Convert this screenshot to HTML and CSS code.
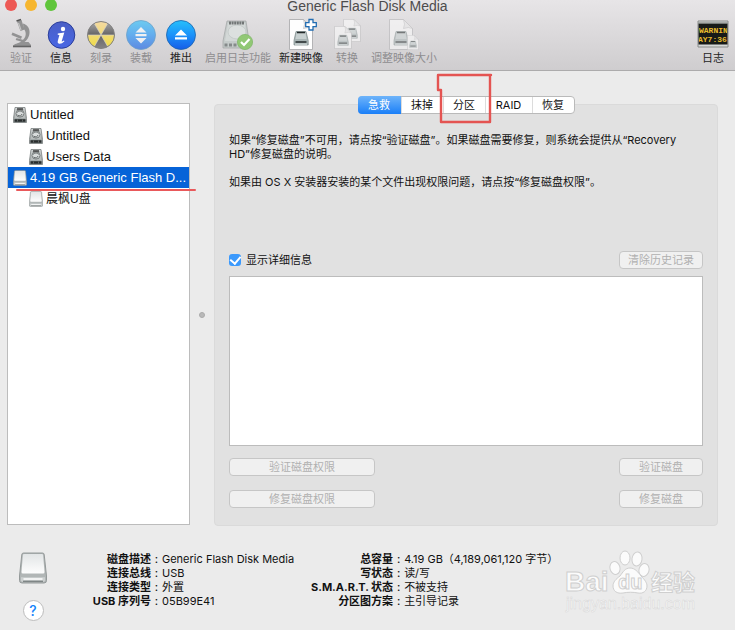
FILE: index.html
```html
<!DOCTYPE html>
<html lang="zh-CN">
<head>
<meta charset="utf-8">
<title>Generic Flash Disk Media</title>
<link rel="stylesheet" href="styles.css">
</head>
<body>
<svg class="defs" aria-hidden="true">
  <defs>
    <linearGradient id="metal" x1="0" y1="0" x2="0" y2="1"><stop offset="0" stop-color="#d9dddd"/><stop offset="1" stop-color="#8e9696"/></linearGradient>
    <linearGradient id="plate" x1="0" y1="0" x2="0" y2="1"><stop offset="0" stop-color="#e2e5e6"/><stop offset="1" stop-color="#fdfdfd"/></linearGradient>
    <linearGradient id="info" x1="0" y1="0" x2="0" y2="1"><stop offset="0" stop-color="#4a5fc6"/><stop offset="1" stop-color="#4967e4"/></linearGradient>
    <linearGradient id="blue" x1="0" y1="0" x2="0" y2="1"><stop offset="0" stop-color="#27c0fb"/><stop offset=".5" stop-color="#1b92fa"/><stop offset="1" stop-color="#155de8"/></linearGradient>
    <linearGradient id="yellow" x1="0" y1="0" x2="0" y2="1"><stop offset="0" stop-color="#f4d9a4"/><stop offset="1" stop-color="#efdc48"/></linearGradient>
    <linearGradient id="dark" x1="0" y1="0" x2="0" y2="1"><stop offset="0" stop-color="#aaa9aa"/><stop offset=".5" stop-color="#656465"/><stop offset="1" stop-color="#858384"/></linearGradient>
    <symbol id="hdd" viewBox="0 0 14 16">
      <path d="M2 .5h10l1.500 11v4H.5v-4z" fill="url(#metal)" stroke="#7b8080" stroke-width=".8"/>
      <path d="M3 2h8l1 9H2z" fill="#b9bebe"/>
      <ellipse cx="7" cy="6.500" rx="4" ry="3.600" fill="#d8dcdc" stroke="#666c6c" stroke-width=".8"/>
      <path d="M4 5.500c2-2 4-2 6 0M4.500 8c2 1.500 4 1 4.500-1" fill="none" stroke="#5a6060" stroke-width=".9"/>
      <path d="M4 2h6" stroke="#333" stroke-width="1.400"/>
      <path d="M1.500 13.500h11" stroke="#292d2d" stroke-width="2.600"/>
      <path d="M4.500 12.500v2M9.500 12.500v2" stroke="#6e7474" stroke-width=".8"/>
    </symbol>
    <symbol id="usb" viewBox="0 0 28 32">
      <path d="M4.500 1h19q1.500 0 1.700 1.500L27.500 24v4.500q0 2.500-2.500 2.500H3Q.5 31 .5 28.500V24L2.800 2.500Q3 1 4.500 1z" fill="#b1b6b6" stroke="#8d9393" stroke-width=".9"/>
      <path d="M5 2h18q1 0 1.100 1L25.500 20q.1 1.500-1.500 1.500H4q-1.600 0-1.500-1.500L3.900 3Q4 2 5 2z" fill="url(#plate)"/>
      <path d="M2 25.200h24v3q0 1.800-2 1.800H4q-2 0-2-1.800z" fill="#ccd0d0"/>
      <path d="M4.500 27h19" stroke="#fff" stroke-width="1.500"/>
      <path d="M4 29.300h20" stroke="#777e7e" stroke-width="1.200"/>
    </symbol>
    <symbol id="doc" viewBox="0 0 24 31">
      <path d="M.5.500h14l9 9v21H.5z" fill="#fefefe" stroke="#a5a5a7" stroke-width=".8"/>
      <path d="M14.500.500q2 5 0 9 5-2 9 0z" fill="#ebebec" stroke="#b3b3b5" stroke-width=".6"/>
      <path d="M7 12.500h10l2.200 9V26H5v-4.500z" fill="#a9b5b5" stroke="#788686" stroke-width=".7"/>
      <path d="M7.500 14h9l1 6h-11z" fill="#c8d1d1"/>
      <path d="M8 13.500h8M6.500 23h11" stroke="#22292a" stroke-width="1.700"/>
      <path d="M6 25.200h12" stroke="#e8eeee" stroke-width=".8"/>
    </symbol>
  </defs>
</svg>

<header class="titlebar">
  <div class="caption">
    <div class="lights"><i class="light red"></i><i class="light amber"></i><i class="light green"></i></div>
    <h1>Generic Flash Disk Media</h1>
  </div>
  <div class="toolbar">
    <button class="tool" disabled>
      <svg width="32" height="32" viewBox="0 0 32 32"><g fill="#929293"><path d="M12 3.500l4.500-1.500 3 9.500-4 1.500z"/><path d="M18 5.500c8 2 9 13 1.500 18.500h4L26 27v2H8v-1.500c3-2.500 6-2 8-4l.5-.5c5-3 5.500-9 2-12.500z"/><path d="M7.500 14.500l9.500 4-1 2.500-9.500-4z"/><path d="M11.500 20l7 2-.8 2-7-2z"/></g><path d="M13.500 5l2.500 7" stroke="#c4c4c5" stroke-width="1.200"/><path d="M8 28.500h18" stroke="#646465" stroke-width="1.600"/><path d="M11.500 3l4.500-1.500" stroke="#555" stroke-width="1.500"/></svg>
      <span>验证</span>
    </button>
    <button class="tool">
      <svg width="32" height="32" viewBox="0 0 32 32"><circle cx="16.500" cy="17" r="13.300" fill="url(#info)" stroke="#2c3f9b"/><circle cx="18" cy="11" r="2.200" fill="#fff"/><path d="M12.800 15.500l6.500-1-2.600 8.700q-.2 1 2.200-.8l.6.800q-3 3-5.400 2.500-2-.5-1.200-3.200l1.500-5.500-1.700-.3z" fill="#fff"/></svg>
      <span>信息</span>
    </button>
    <button class="tool" disabled>
      <svg width="32" height="32" viewBox="0 0 32 32"><circle cx="16" cy="17" r="13.500" fill="url(#dark)"/><path d="M16 17L9.200 5.300a13.500 13.500 0 0 1 13.600 0zM16 17h13.500a13.500 13.500 0 0 1-6.700 11.700zM16 17H2.500a13.500 13.500 0 0 0 6.700 11.700z" fill="url(#yellow)"/><path d="M9.200 5.300L22.800 28.700M22.800 5.300L9.200 28.700M2.500 17h27" stroke="#d6d3c9" stroke-width=".7"/><circle cx="16" cy="17" r="13.500" fill="none" stroke="#828181"/></svg>
      <span>刻录</span>
    </button>
    <button class="tool" disabled>
      <svg width="32" height="32" viewBox="0 0 32 32"><g opacity=".62"><circle cx="16" cy="17" r="14.500" fill="url(#blue)" stroke="#2a80bf" stroke-width=".8"/><path d="M16 9l5.500 5.500h-11zM10.500 16h11v2.200h-11zM10.500 20h11L16 25.500z" fill="#fff"/></g></svg>
      <span>装载</span>
    </button>
    <button class="tool">
      <svg width="32" height="32" viewBox="0 0 32 32"><circle cx="16" cy="17" r="14.500" fill="url(#blue)" stroke="#1b63ac" stroke-width=".8"/><path d="M16 11.500l6 6H10zM10 19.200h12v2.300H10z" fill="#fff"/></svg>
      <span>推出</span>
    </button>
    <button class="tool" disabled>
      <svg width="32" height="32" viewBox="0 0 32 32"><path d="M5 3h19l3 20v7H1v-7z" fill="#c5cbca" stroke="#a0a5a5" stroke-width=".7"/><path d="M6 5h17l2 18H3z" fill="#d3d8d7"/><ellipse cx="15" cy="14" rx="9" ry="7" fill="#dce0df" stroke="#c6cccb"/><path d="M7 5h15" stroke="#727676" stroke-width="3" stroke-dasharray="2 .6"/><path d="M2.500 27h14" stroke="#858a8a" stroke-width="3" stroke-dasharray="3 1.500"/><circle cx="23" cy="24" r="7.600" fill="#91c875" stroke="#83b76c" stroke-width=".8"/><path d="M19 24l3 3 5.500-6" fill="none" stroke="#fff" stroke-width="2.200"/></svg>
      <span>启用日志功能</span>
    </button>
    <button class="tool">
      <svg width="32" height="32" viewBox="0 0 32 32"><use href="#doc" x="4" y="1" width="24" height="31"/><path d="M24 1.500h4v3.200h3.300v4H28V12h-4V8.700h-3.300v-4H24z" fill="#fff" stroke="#226db2" stroke-width="1.300"/></svg>
      <span>新建映像</span>
    </button>
    <button class="tool" disabled>
      <svg width="32" height="32" viewBox="0 0 32 32"><g opacity=".55"><use href="#doc" x="12" y="1" width="18" height="23"/><use href="#doc" x="3" y="8" width="18" height="23"/></g></svg>
      <span>转换</span>
    </button>
    <button class="tool" disabled>
      <svg width="32" height="32" viewBox="0 0 32 32"><g opacity=".55"><use href="#doc" x="1" y="1" width="24" height="31"/><use href="#doc" x="19" y="17" width="12" height="15"/></g></svg>
      <span>调整映像大小</span>
    </button>
    <button class="tool log">
      <svg width="32" height="32" viewBox="0 0 32 32"><path d="M1 3h30v26H1z" fill="#d7d9d8" stroke="#888b89"/><path d="M1.500 5.500h29v21h-29z" fill="#171a18"/><path d="M1.500 5h29" stroke="#777b79"/><svg x="2" y="6" width="28" height="20"><text class="led" x="0" y="9">WARNIN</text><text class="led" x="-1" y="18">AY7:36</text></svg></svg>
      <span>日志</span>
    </button>
  </div>
</header>

<main>
  <nav class="disks" aria-label="磁盘">
    <ul>
      <li><svg class="disk"><use href="#hdd"/></svg><span>Untitled</span></li>
      <li class="child"><svg class="disk"><use href="#hdd"/></svg><span>Untitled</span></li>
      <li class="child"><svg class="disk"><use href="#hdd"/></svg><span>Users Data</span></li>
      <li class="selected"><svg class="disk"><use href="#usb"/></svg><span>4.19 GB Generic Flash D...</span>
        <svg class="underline" viewBox="0 0 180 4"><path d="M1 2h178" stroke="#e9595b" stroke-width="2" stroke-linecap="round"/></svg></li>
      <li class="child"><svg class="disk"><use href="#usb"/></svg><span class="volume">晨枫U盘</span></li>
    </ul>
  </nav>
  <div class="splitter"><i></i></div>
  <section class="panel">
    <div class="tabs" role="tablist">
      <button role="tab" aria-selected="true">急救</button>
      <button role="tab">抹掉</button>
      <button role="tab" class="marked">分区<svg class="frame" viewBox="0 0 58 54"><path d="M55 3H2v15h3v32h49V3" fill="none" stroke="#e45452" stroke-width="2.400" stroke-linejoin="round" stroke-linecap="round"/></svg></button>
      <button role="tab">RAID</button>
      <button role="tab">恢复</button>
    </div>
    <div class="help-text">
      <p>如果“修复磁盘”不可用，请点按“验证磁盘”。如果磁盘需要修复，则系统会提供从“Recovery HD”修复磁盘的说明。</p>
      <p>如果由 OS X 安装器安装的某个文件出现权限问题，请点按“修复磁盘权限”。</p>
    </div>
    <div class="row options">
      <label class="check"><input type="checkbox" checked><span>显示详细信息</span></label>
      <button class="push small" disabled>清除历史记录</button>
    </div>
    <textarea aria-label="详细信息" readonly></textarea>
    <div class="row"><button class="push wide" disabled>验证磁盘权限</button><button class="push small" disabled>验证磁盘</button></div>
    <div class="row"><button class="push wide" disabled>修复磁盘权限</button><button class="push small" disabled>修复磁盘</button></div>
  </section>
</main>

<footer>
  <div class="side">
    <svg width="28" height="32"><use href="#usb"/></svg>
    <button class="help" aria-label="帮助">?</button>
  </div>
  <dl class="first">
    <dt>磁盘描述</dt><dd>Generic Flash Disk Media</dd>
    <dt>连接总线</dt><dd>USB</dd>
    <dt>连接类型</dt><dd>外置</dd>
    <dt>USB 序列号</dt><dd>05B99E41</dd>
  </dl>
  <dl class="second">
    <dt>总容量</dt><dd>4.19 GB（4,189,061,120 字节）</dd>
    <dt>写状态</dt><dd>读/写</dd>
    <dt>S.M.A.R.T. 状态</dt><dd>不被支持</dd>
    <dt>分区图方案</dt><dd>主引导记录</dd>
  </dl>
  <svg class="watermark" width="140" height="66" viewBox="0 0 140 66">
    <g fill="#fbfbfb" stroke="#cfcfcf" stroke-width="1">
      <text class="brand" x="3" y="43">Bai</text>
      <ellipse cx="53" cy="20" rx="5" ry="6.500" transform="rotate(-15 53 20)"/>
      <ellipse cx="63" cy="10" rx="5" ry="7"/>
      <ellipse cx="75" cy="11" rx="5" ry="7" transform="rotate(8 75 11)"/>
      <ellipse cx="82" cy="22" rx="5" ry="6.500" transform="rotate(15 82 22)"/>
      <path d="M68 20c5 0 8 4 11 8 4 4 6 7 6 10 0 5-4 8-9 7-5-1-10-1-15 0-6 1-10-2-10-7 0-4 3-7 7-10 3-4 5-8 10-8z"/>
      <text class="du" x="56" y="41">du</text>
      <text class="word" x="89" y="42">经验</text>
    </g>
    <text class="site" x="4" y="61">jingyan.baidu.com</text>
  </svg>
</footer>
</body>
</html>
```

FILE: styles.css
```css
* { box-sizing: border-box; }

body {
  margin: 0;
  min-height: 100vh;
  display: flex;
  flex-direction: column;
  background: #ebebeb;
  color: #111;
  font: 11px/14px Inter, "Noto Sans CJK SC", sans-serif;
}

button { font: inherit; color: inherit; padding: 0; border: 0; background: none; }
ul, dl, dd, p, h1 { margin: 0; padding: 0; }
.defs { position: absolute; width: 0; height: 0; }

/* Title bar and toolbar */
.titlebar {
  height: 71px;
  background: linear-gradient(#e7e5e7, #cfcdcf);
  border-bottom: 1px solid #acabac;
  overflow: hidden;
}
.caption {
  display: grid;
  grid-template-columns: 1fr auto 1fr;
  height: 18px;
}
.lights { display: flex; gap: 8px; padding-left: 5px; margin-top: -1px; }
.light { width: 12px; height: 12px; border-radius: 50%; }
.red { background: #ed5955; }
.amber { background: #f6b630; }
.green { background: #60c53c; }
h1 {
  font: 14px/18px "Liberation Sans", sans-serif;
  color: #4d4c4d;
  margin-top: -3px;
}
.toolbar { display: flex; gap: 8px; padding: 0 6px 0 5px; }
.tool {
  display: flex;
  flex-direction: column;
  align-items: center;
  min-width: 32px;
  gap: 1px;
  color: #242424;
}
.tool:disabled { color: #8e8d8f; }
.log { margin-left: auto; }
.led { font: bold 8px "Liberation Mono", monospace; fill: #e8ba2e; }

/* Disk list */
main { flex: 1; display: flex; padding: 32px 17px 0 7px; }
.disks {
  width: 183px;
  background: #fff;
  border: 1px solid #bcbcbc;
  margin-bottom: 1px;
  font: 13px/20px "Liberation Sans", "Noto Sans CJK SC", sans-serif;
}
.disks ul { list-style: none; }
.disks li {
  position: relative;
  display: flex;
  align-items: center;
  height: 21px;
  gap: 3px;
  padding-left: 5px;
  white-space: nowrap;
}
.disks .child { padding-left: 21px; }
.disks .selected { background: #0663d8; color: #fff; }
.volume { font-size: 12px; }
.disk { width: 14px; height: 16px; flex: none; }
.underline { position: absolute; left: 8px; top: 21px; width: 180px; height: 4px; z-index: 1; }

.splitter { width: 24px; display: flex; align-items: center; justify-content: center; }
.splitter i { width: 6px; height: 6px; border-radius: 50%; background: #b9b9b9; border: 1px solid #aaa; }

/* First-aid panel */
.panel {
  flex: 1;
  display: flex;
  flex-direction: column;
  margin-top: 1px;
  padding: 0 14px 17px;
  background: #e1e1e1;
  border: 1px solid #dadada;
  border-radius: 4px;
}
.tabs {
  align-self: center;
  display: flex;
  height: 18px;
  margin-top: -9px;
  background: #fff;
  border: 1px solid #bababa;
  border-radius: 4px;
}
.tabs button { width: 42px; border-left: 1px solid #dcdcdc; line-height: 16px; }
.tabs button:nth-child(4) { width: 47px; }
.tabs button:first-child {
  width: 43px;
  margin: -1px 0 -1px -1px;
  border: 0;
  border-radius: 4px 0 0 4px;
  background: linear-gradient(#6eb4fa, #1a7ff8);
  color: #fff;
}
.tabs .marked { position: relative; }
.frame { position: absolute; left: -8px; top: -25px; width: 58px; height: 54px; }

.help-text {
  display: grid;
  gap: 14px;
  min-height: 118px;
  margin-top: 19px;
  padding-right: 20px;
  align-content: start;
}
.row { display: flex; justify-content: space-between; margin-top: 14px; }
.row.options { align-items: center; margin: 0 0 7px; }
.check { display: flex; align-items: center; gap: 5px; }
.check input {
  appearance: none;
  width: 12px;
  height: 12px;
  margin: 0;
  border-radius: 3px;
  background: #3b99fc;
  display: grid;
  place-items: center;
}
.check input:checked::before {
  content: "";
  width: 5px;
  height: 8px;
  margin-top: -2px;
  border: solid #fff;
  border-width: 0 2px 2px 0;
  transform: rotate(40deg);
}
textarea {
  flex: 1;
  width: 100%;
  min-height: 60px;
  border: 1px solid #bcbcbc;
  background: #fff;
  resize: none;
  display: block;
  margin-bottom: -2px;
}
.push {
  height: 18px;
  line-height: 16px;
  border: 1px solid #c6c6c6;
  border-radius: 4px;
  background: #f0f0f0;
  color: #b0b0b0;
}
.wide { width: 146px; }
.small { width: 84px; }

/* Disk details */
footer { display: flex; height: 104px; padding: 26px 36px 0 19px; }
.side { width: 28px; display: flex; flex-direction: column; align-items: center; gap: 16px; }
.help {
  width: 21px;
  height: 21px;
  border-radius: 50%;
  background: #fff;
  border: 1px solid #bdbdbd;
  color: #1483fa;
  font-size: 14px;
  font-weight: 500;
}
dl { display: grid; grid-auto-rows: 14px; align-content: start; white-space: nowrap; }
dt { font-weight: 700; text-align: right; }
dt::after { content: ":"; display: inline-block; width: 11px; text-align: center; font-weight: 500; }
.first { grid-template-columns: 115px 149px; }
.second { grid-template-columns: auto 1fr; }
.watermark { flex: none; margin: -4px -3px 0 auto; }
.brand { font: bold 28px "Liberation Sans", sans-serif; }
.du { font: bold 20px "Liberation Sans", sans-serif; }
.word { font: bold 22px "Noto Sans CJK SC", sans-serif; }
.site { font: 16px "Liberation Sans", sans-serif; fill: #fafafa; stroke: #d6d6d6; stroke-width: .5; }
```
